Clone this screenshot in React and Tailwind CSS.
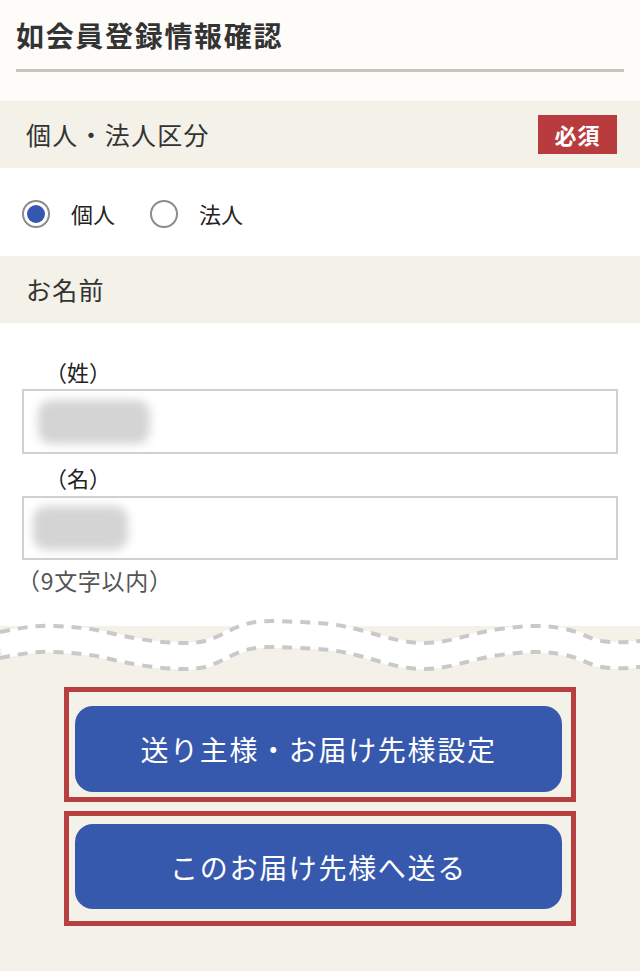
import React from 'react'

const WAVE = 'M0,17 C20,13 35,10 55,11 S90,13 110,18 S160,28 185,28 S215,22 235,13 S270,6 300,7 S340,10 360,15 S400,28 425,28 S470,18 500,14 S545,10 565,14 S590,26 610,27 S635,26 640,26'

function Wave() {
  return (
    <svg viewBox="0 0 640 60" className="block w-full h-[60px]">
      <rect x="0" y="0" width="640" height="11" fill="#ffffff" />
      <path d={WAVE} transform="translate(0,13)" fill="none" stroke="#ffffff" strokeWidth="27" />
      <path d={WAVE} fill="none" stroke="#c9c9c9" strokeWidth="4" strokeDasharray="10 8" />
      <path d={WAVE} transform="translate(0,26)" fill="none" stroke="#c9c9c9" strokeWidth="4" strokeDasharray="10 8" />
    </svg>
  )
}

function SectionHead({ label, required }) {
  return (
    <div className="h-[67px] flex items-center justify-between pl-[26px] pr-[23px]">
      <span className="text-[25px] tracking-[0.05em] text-[#333]">{label}</span>
      {required && (
        <span className="w-[79px] h-[39px] flex items-center justify-center bg-[#b83c3d] text-white font-bold text-[22px] tracking-[0.04em]">必須</span>
      )}
    </div>
  )
}

function Radio({ checked, label }) {
  return (
    <label className="flex items-center gap-[21px]">
      <span className="w-[28px] h-[28px] rounded-full border-2 border-[#8c8c8c] bg-white flex items-center justify-center">
        {checked && <span className="w-[18px] h-[18px] rounded-full bg-[#3557b0]" />}
      </span>
      <span className="text-[22px] text-[#222]">{label}</span>
    </label>
  )
}

function Field({ blobW, pad, h }) {
  return (
    <div className={`flex items-center border-2 border-[#d0d0d0] bg-white ${h}`} style={{ paddingLeft: pad }}>
      <div className="h-[44px] rounded-[14px] bg-[#d4d4d4] blur-[5px]" style={{ width: blobW }} />
    </div>
  )
}

export default function App() {
  return (
    <div className="min-h-screen bg-[#f4f1e9] font-['Noto_Sans_CJK_JP','Noto_Sans',sans-serif] text-[#222]">
      <header className="h-[101px] bg-[#fdfcf8] px-4 pt-[16px]">
        <h1 className="text-[28px] leading-[38px] font-bold tracking-[0.06em] text-[#333]">如会員登録情報確認</h1>
        <div className="mt-[15px] h-[3px] bg-[#cbc6ba]" />
      </header>

      <SectionHead label="個人・法人区分" required />
      <div className="h-[88px] bg-white flex items-center gap-[35px] pl-[22px] pt-[3px]">
        <Radio checked label="個人" />
        <Radio label="法人" />
      </div>

      <SectionHead label="お名前" />
      <div className="bg-white px-[22px] pt-[33px] pb-[20px]">
        <p className="pl-[23px] text-[22px] leading-[30px]">（姓）</p>
        <div className="mt-[3px]">
          <Field blobW={112} pad={14} h="h-[65px]" />
        </div>
        <p className="mt-[8px] pl-[23px] text-[22px] leading-[30px]">（名）</p>
        <div className="mt-[4px]">
          <Field blobW={95} pad={9} h="h-[64px]" />
        </div>
        <p className="mt-[5px] -ml-[5px] text-[23px] leading-[30px] tracking-[0.03em] text-[#555]">（9文字以内）</p>
      </div>
      <Wave />

      <div className="pt-[12px] pb-[44px] flex flex-col items-center gap-[9px]">
        <div className="w-[512px] border-[5px] border-[#b83f40] pt-[14px] pb-[5px] pl-[6px] pr-[9px]">
          <button className="w-full h-[86px] rounded-[18px] bg-[#3759ad] text-white text-[28px] tracking-[0.06em]">送り主様・お届け先様設定</button>
        </div>
        <div className="w-[512px] border-[5px] border-[#b83f40] pt-[8px] pb-[12px] pl-[6px] pr-[9px]">
          <button className="w-full h-[85px] rounded-[18px] bg-[#3759ad] text-white text-[28px] tracking-[0.06em]">このお届け先様へ送る</button>
        </div>
      </div>
    </div>
  )
}
